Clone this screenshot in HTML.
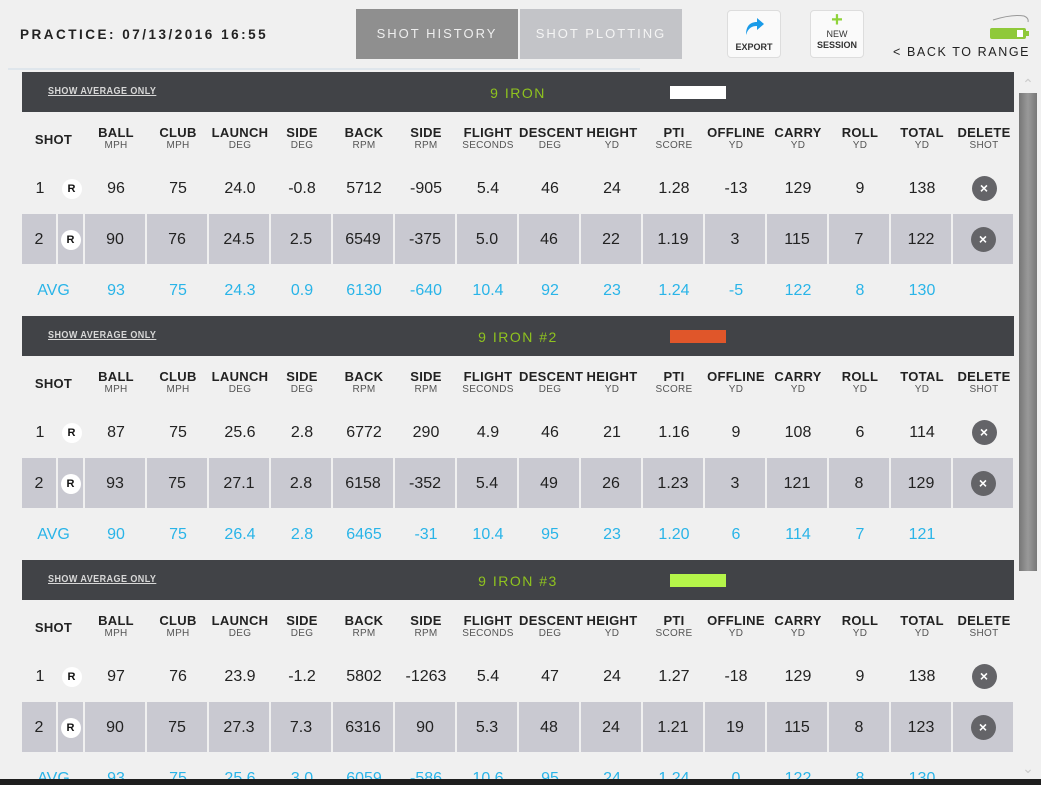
<!DOCTYPE html>
<html><head><meta charset="utf-8"><style>
*{margin:0;padding:0;box-sizing:border-box}
html{width:1041px;height:785px;overflow:hidden;background:#f0f0f0}
body{width:1041px;height:785px;background:#f0f0f0;font-family:"Liberation Sans",Arial,sans-serif;position:relative;overflow:hidden;color:#222}
.abs{position:absolute}
.blk{position:absolute;left:22px;width:992px;height:244px}
.bar{position:absolute;left:0;top:0;width:992px;height:40px;background:#414347}
.sao{position:absolute;left:26px;top:14px;font-size:10px;color:#d8d8d8;text-decoration:underline;letter-spacing:.5px;font-weight:bold;transform:scaleX(.9);transform-origin:left}
.ttl{position:absolute;left:420px;width:152px;top:13px;text-align:center;color:#8fc31f;font-size:14px;letter-spacing:1.5px}
.sw{position:absolute;left:648px;top:14px;width:56px;height:13px}
.row{position:absolute;left:0;display:flex;width:993px}
.row div{flex:none;width:62px;text-align:center}
.row .c0{width:36px}.row .c1{width:27px}
.hd{top:54px;height:34px}
.hd div{font-weight:bold;font-size:13px;letter-spacing:.3px;line-height:14px;color:#222}
.hd div small{display:block;font-weight:normal;font-size:10px;color:#555;line-height:11px;letter-spacing:.3px}
.hd .sh{width:63px;padding-top:7px}
.d{height:50px;line-height:50px;font-size:16px;color:#222}
.r1{top:92px}
.r2{top:142px;line-height:52px}
.r2 div{background:#c9c9d1;border-right:2px solid #f0f0f0}
.av{top:194px;color:#29b4e8}
.R{display:inline-block;width:20px;height:20px;border-radius:50%;background:#fff;color:#111;font-size:11px;font-weight:bold;line-height:20px;vertical-align:middle}
.x{display:inline-block;width:25px;height:25px;border-radius:50%;background:#646468;color:#fff;font-size:14px;line-height:25px;vertical-align:middle;font-weight:bold}
</style></head><body>
<div class="abs" style="left:20px;top:27px;font-size:13.5px;letter-spacing:2.5px;color:#222;font-weight:bold">PRACTICE: 07/13/2016 16:55</div>
<div class="abs" style="left:356px;top:9px;width:162px;height:50px;background:#8f8f8f;color:#eee;text-align:center;line-height:50px;font-size:13px;letter-spacing:2px">SHOT HISTORY</div>
<div class="abs" style="left:520px;top:9px;width:162px;height:50px;background:#c3c4c8;color:#f4f4f4;text-align:center;line-height:50px;font-size:13px;letter-spacing:2px">SHOT PLOTTING</div>
<div class="abs" style="left:727px;top:10px;width:54px;height:48px;background:#fafafa;border:1px solid #ddd;border-radius:4px;text-align:center">
<svg width="24" height="22" viewBox="0 0 24 22" style="margin-top:4px"><path d="M4 20 C4 10 9 7 15 7 L15 3 L22 9 L15 15 L15 11 C10 11 6 13 4 20Z" fill="#1a9be8"/></svg>
<div style="font-size:9px;font-weight:bold;color:#333;margin-top:0">EXPORT</div></div>
<div class="abs" style="left:810px;top:10px;width:54px;height:48px;background:#fafafa;border:1px solid #ddd;border-radius:4px;text-align:center">
<div style="color:#8fd33a;font-size:20px;line-height:18px;font-weight:bold">+</div>
<div style="font-size:9px;color:#333;line-height:11px">NEW</div><div style="font-size:9px;font-weight:bold;color:#333;line-height:11px">SESSION</div></div>
<svg class="abs" style="left:988px;top:14px" width="42" height="26" viewBox="0 0 42 26"><path d="M5 6 Q24 0 36 2 Q41 4 40 8" stroke="#999" fill="none" stroke-width="1"/><rect x="2" y="14" width="36" height="11" rx="2" fill="#8fc93a"/><rect x="29" y="16" width="6" height="7" fill="#fff"/><rect x="38" y="17" width="3" height="5" fill="#8fc93a"/></svg>
<div class="abs" style="left:893px;top:45px;font-size:12.5px;letter-spacing:1.6px;color:#222;white-space:nowrap">&lt; BACK TO RANGE</div>
<div class="abs" style="left:8px;top:68px;width:632px;height:2px;background:#dfe6ec"></div>
<div class="abs" style="left:1018px;top:78px;width:20px;height:12px;color:#ccc;font-size:14px;text-align:center;line-height:12px">&#8963;</div>
<div class="abs" style="left:1019px;top:93px;width:18px;height:478px;background:linear-gradient(90deg,#777,#999,#777)"></div>
<div class="abs" style="left:1018px;top:760px;width:20px;height:12px;color:#ccc;font-size:14px;text-align:center">&#8964;</div>

<div class="blk" style="top:72px">
<div class="bar"><div class="sao">SHOW AVERAGE ONLY</div><div class="ttl">9 IRON</div><div class="sw" style="background:#fff"></div></div>
<div class="row hd"><div class="sh">SHOT</div><div>BALL<small>MPH</small></div><div>CLUB<small>MPH</small></div><div>LAUNCH<small>DEG</small></div><div>SIDE<small>DEG</small></div><div>BACK<small>RPM</small></div><div>SIDE<small>RPM</small></div><div>FLIGHT<small>SECONDS</small></div><div>DESCENT<small>DEG</small></div><div>HEIGHT<small>YD</small></div><div>PTI<small>SCORE</small></div><div>OFFLINE<small>YD</small></div><div>CARRY<small>YD</small></div><div>ROLL<small>YD</small></div><div>TOTAL<small>YD</small></div><div>DELETE<small>SHOT</small></div></div>
<div class="row d r1"><div class="c0">1</div><div class="c1"><span class="R">R</span></div><div>96</div><div>75</div><div>24.0</div><div>-0.8</div><div>5712</div><div>-905</div><div>5.4</div><div>46</div><div>24</div><div>1.28</div><div>-13</div><div>129</div><div>9</div><div>138</div><div><span class="x">×</span></div></div>
<div class="row d r2"><div class="c0">2</div><div class="c1"><span class="R">R</span></div><div>90</div><div>76</div><div>24.5</div><div>2.5</div><div>6549</div><div>-375</div><div>5.0</div><div>46</div><div>22</div><div>1.19</div><div>3</div><div>115</div><div>7</div><div>122</div><div><span class="x">×</span></div></div>
<div class="row d av"><div style="width:63px">AVG</div><div>93</div><div>75</div><div>24.3</div><div>0.9</div><div>6130</div><div>-640</div><div>10.4</div><div>92</div><div>23</div><div>1.24</div><div>-5</div><div>122</div><div>8</div><div>130</div><div></div></div>
</div>

<div class="blk" style="top:316px">
<div class="bar"><div class="sao">SHOW AVERAGE ONLY</div><div class="ttl">9 IRON #2</div><div class="sw" style="background:#e0562a"></div></div>
<div class="row hd"><div class="sh">SHOT</div><div>BALL<small>MPH</small></div><div>CLUB<small>MPH</small></div><div>LAUNCH<small>DEG</small></div><div>SIDE<small>DEG</small></div><div>BACK<small>RPM</small></div><div>SIDE<small>RPM</small></div><div>FLIGHT<small>SECONDS</small></div><div>DESCENT<small>DEG</small></div><div>HEIGHT<small>YD</small></div><div>PTI<small>SCORE</small></div><div>OFFLINE<small>YD</small></div><div>CARRY<small>YD</small></div><div>ROLL<small>YD</small></div><div>TOTAL<small>YD</small></div><div>DELETE<small>SHOT</small></div></div>
<div class="row d r1"><div class="c0">1</div><div class="c1"><span class="R">R</span></div><div>87</div><div>75</div><div>25.6</div><div>2.8</div><div>6772</div><div>290</div><div>4.9</div><div>46</div><div>21</div><div>1.16</div><div>9</div><div>108</div><div>6</div><div>114</div><div><span class="x">×</span></div></div>
<div class="row d r2"><div class="c0">2</div><div class="c1"><span class="R">R</span></div><div>93</div><div>75</div><div>27.1</div><div>2.8</div><div>6158</div><div>-352</div><div>5.4</div><div>49</div><div>26</div><div>1.23</div><div>3</div><div>121</div><div>8</div><div>129</div><div><span class="x">×</span></div></div>
<div class="row d av"><div style="width:63px">AVG</div><div>90</div><div>75</div><div>26.4</div><div>2.8</div><div>6465</div><div>-31</div><div>10.4</div><div>95</div><div>23</div><div>1.20</div><div>6</div><div>114</div><div>7</div><div>121</div><div></div></div>
</div>

<div class="blk" style="top:560px">
<div class="bar"><div class="sao">SHOW AVERAGE ONLY</div><div class="ttl">9 IRON #3</div><div class="sw" style="background:#b5f54a"></div></div>
<div class="row hd"><div class="sh">SHOT</div><div>BALL<small>MPH</small></div><div>CLUB<small>MPH</small></div><div>LAUNCH<small>DEG</small></div><div>SIDE<small>DEG</small></div><div>BACK<small>RPM</small></div><div>SIDE<small>RPM</small></div><div>FLIGHT<small>SECONDS</small></div><div>DESCENT<small>DEG</small></div><div>HEIGHT<small>YD</small></div><div>PTI<small>SCORE</small></div><div>OFFLINE<small>YD</small></div><div>CARRY<small>YD</small></div><div>ROLL<small>YD</small></div><div>TOTAL<small>YD</small></div><div>DELETE<small>SHOT</small></div></div>
<div class="row d r1"><div class="c0">1</div><div class="c1"><span class="R">R</span></div><div>97</div><div>76</div><div>23.9</div><div>-1.2</div><div>5802</div><div>-1263</div><div>5.4</div><div>47</div><div>24</div><div>1.27</div><div>-18</div><div>129</div><div>9</div><div>138</div><div><span class="x">×</span></div></div>
<div class="row d r2"><div class="c0">2</div><div class="c1"><span class="R">R</span></div><div>90</div><div>75</div><div>27.3</div><div>7.3</div><div>6316</div><div>90</div><div>5.3</div><div>48</div><div>24</div><div>1.21</div><div>19</div><div>115</div><div>8</div><div>123</div><div><span class="x">×</span></div></div>
<div class="row d av"><div style="width:63px">AVG</div><div>93</div><div>75</div><div>25.6</div><div>3.0</div><div>6059</div><div>-586</div><div>10.6</div><div>95</div><div>24</div><div>1.24</div><div>0</div><div>122</div><div>8</div><div>130</div><div></div></div>
</div>
<div class="abs" style="left:0;top:779px;width:1041px;height:6px;background:#1e1e1e"></div>
</body></html>
